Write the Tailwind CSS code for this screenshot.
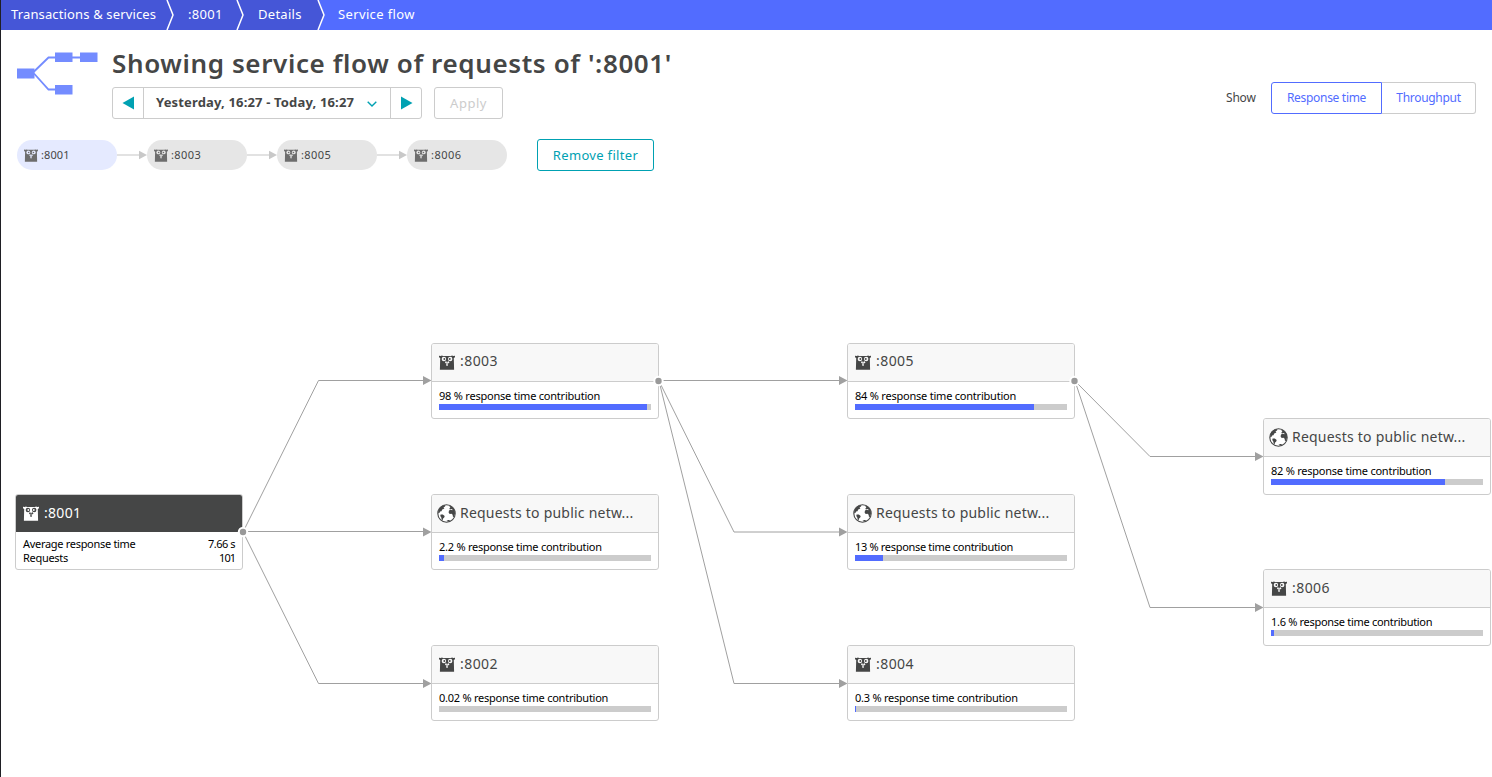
<!DOCTYPE html>
<html lang="en">
<head>
<meta charset="utf-8">
<title>Service flow</title>
<script src="https://cdn.jsdelivr.net/npm/@tailwindcss/browser@4"></script>
</head>
<body class="h-[777px] w-[1492px] overflow-hidden bg-white font-['Noto_Sans','Open_Sans',sans-serif] text-[#454646]">
<svg width="0" height="0" class="absolute">
  <symbol id="gopher" viewBox="0 0 16 15">
    <path fill="currentColor" d="M1.700 1 3 .6 4 .9h8l1-.3 1.300.4 1.700-.3v1.600l-1.200.8.3 11.600H.9l.3-11.600L0 2.300V.7z"/>
    <g fill="var(--face)"><circle cx="4.900" cy="4" r="2.200"/><circle cx="11.200" cy="4" r="2.200"/><ellipse cx="8.100" cy="7.300" rx="2" ry="1.300"/><path d="M7.200 8.500h1.800v2.200H7.200z"/></g>
    <g fill="currentColor"><circle cx="5.300" cy="4" r=".9"/><circle cx="10.800" cy="4" r=".9"/><ellipse cx="8.100" cy="6.700" rx=".9" ry=".6"/><path d="M7.900 8.800h.4v1.600h-.4z"/></g>
  </symbol>
  <symbol id="globe" viewBox="0 0 19 19">
    <circle cx="9.500" cy="9.500" r="8.700" fill="#fff" stroke="#454646" stroke-width="1.100"/>
    <path fill="#454646" d="M1.200 7.400C2 4.300 4.500 1.700 7.500 1.100l1 .6-.8 1.100-1.300.6 1 .9-.9.8-1.300.5-.7 1.600-1.500.3-.2 1.100L1.200 9.500zM3.600 10.400l2.200.2 1.900 1.300-.5 1.600-1.100.9-.5 1.900-.9-.6-.4-2.200-1-1.500zM11.800 1.200c3.200.9 5.400 3.200 6.100 6.300l.1 2.300-1.300 3.300-.7-.2-.4-2.200-1-1-1.900.2-1.100-1.400.4-1.900 1.500-.8 1.800.5.3-.7-1.500-.6-1.300.4-.4-1.100 1-.9-.8-.8zM9.300 17l1.900-1 2.100.1-1.700 1.500z"/>
  </symbol>
</svg>
<div class="flex h-full flex-col border-l border-[#1f1f24]">
  <nav class="relative flex h-[30px] shrink-0 bg-[#526cff] text-[13px] leading-[29px] text-white">
    <svg class="absolute left-0 top-0" width="330" height="30" fill="none"><path fill="#4556d7" d="M0 0h317.500l6 15-6 15H0z"/><path stroke="#fff" stroke-width="1.500" d="m166 0 6 15-6 15M236 0l6 15-6 15M317 0l6 15-6 15"/></svg>
    <a class="relative w-[177px] pl-2.5 tracking-[0.14px]">Transactions &amp; services</a>
    <a class="relative w-[70px] pl-2.5 tracking-[0.3px]">:8001</a>
    <a class="relative w-20 pl-2.5 tracking-[0.28px]">Details</a>
    <a class="relative pl-2.5 tracking-[0.36px]">Service flow</a>
  </nav>
  <header class="flex h-[89px] shrink-0 pl-4 pr-4">
    <svg class="mt-5 w-[95px] shrink-0" height="48" viewBox="0 0 95 48"><path d="M15 23.500 31.500 7.500H72M17 23.500 31.500 39.500H40" fill="none" stroke="#748cff" stroke-width="1.800"/><path fill="#748cff" d="M0 18.500h17.500v10H0zM38 2.500h17.500v9.500H38zM63 2.500h17.500v9.500H63zM38 35h17.500v9.500H38z"/></svg>
    <div class="flex-1">
      <h1 class="mt-3.5 h-[43px] whitespace-nowrap text-[26px] font-semibold leading-[38px] tracking-[0.62px]">Showing service flow of requests of ':8001'</h1>
      <div class="flex h-8">
        <div class="flex w-[310px] rounded-[3px] border border-[#ccc]">
          <button class="flex w-[31px] items-center justify-center border-r border-[#ccc]"><svg width="12" height="14"><path fill="#00a1b2" d="M12 .5v13L.5 7z"/></svg></button>
          <button class="flex flex-1 items-center border-r border-[#ccc] pl-3 text-[13px] font-bold"><span class="w-[211px] whitespace-nowrap text-left tracking-[0.16px]">Yesterday, 16:27 - Today, 16:27</span><svg class="mt-0.5" width="10" height="6" fill="none" stroke="#00a1b2" stroke-width="1.400"><path d="m.7.7 4.300 4.300L9.300.7"/></svg></button>
          <button class="flex w-[30px] items-center justify-center pl-0.5"><svg width="12" height="14"><path fill="#00a1b2" d="M0 .5v13L11.500 7z"/></svg></button>
        </div>
        <button class="ml-3 w-[69px] rounded-[3px] border border-[#ccc] pt-0.5 text-[13px] tracking-[0.5px] text-[#ccc]">Apply</button>
      </div>
    </div>
    <div class="mt-[52px] flex h-8 items-center text-xs">
      <span class="w-[45px] tracking-[-0.2px]">Show</span>
      <button class="h-8 w-[111px] rounded-l-[3px] border border-[#526cff] tracking-[-0.3px] text-[#526cff]">Response time</button>
      <button class="h-8 w-[94px] rounded-r-[3px] border border-l-0 border-[#ccc] tracking-[-0.3px] text-[#526cff]">Throughput</button>
    </div>
  </header>
  <div class="mt-5 flex h-8 shrink-0 items-center pl-4 text-[11px]">
    <div class="flex h-[30px] w-[100px] items-center gap-[3px] rounded-full bg-[#e5eaff] pl-[7px] tracking-[0.1px] [--face:#e5eaff]"><svg width="14" height="13" class="text-[#6d6d6d]"><use href="#gopher"/></svg>:8001</div>
    <svg width="30" height="10"><path stroke="#e2e2e2" stroke-width="2" d="M0 5h23"/><path fill="#c8c8c8" d="M22 .8v8.400L30 5z"/></svg>
    <div class="flex h-[30px] w-[100px] items-center gap-[3px] rounded-full bg-[#e6e6e6] pl-[7px] tracking-[0.4px] [--face:#e6e6e6]"><svg width="14" height="13" class="text-[#6d6d6d]"><use href="#gopher"/></svg>:8003</div>
    <svg width="30" height="10"><path stroke="#e2e2e2" stroke-width="2" d="M0 5h23"/><path fill="#c8c8c8" d="M22 .8v8.400L30 5z"/></svg>
    <div class="flex h-[30px] w-[100px] items-center gap-[3px] rounded-full bg-[#e6e6e6] pl-[7px] tracking-[0.4px] [--face:#e6e6e6]"><svg width="14" height="13" class="text-[#6d6d6d]"><use href="#gopher"/></svg>:8005</div>
    <svg width="30" height="10"><path stroke="#e2e2e2" stroke-width="2" d="M0 5h23"/><path fill="#c8c8c8" d="M22 .8v8.400L30 5z"/></svg>
    <div class="flex h-[30px] w-[100px] items-center gap-[3px] rounded-full bg-[#e6e6e6] pl-[7px] tracking-[0.5px] [--face:#e6e6e6]"><svg width="14" height="13" class="text-[#6d6d6d]"><use href="#gopher"/></svg>:8006</div>
    <button class="ml-[30px] h-8 w-[117px] rounded-[3px] border border-[#00a1b2] pt-0.5 text-[13px] tracking-[0.33px] text-[#00a1b2]">Remove filter</button>
  </div>
</div>

<main>
  <svg class="absolute left-0 top-0" width="1492" height="777" fill="none">
    <path stroke="#a0a0a0" d="m243 532 75.500-151.500H425M243 531.500H425M243 532l75.500 151.500H425M659 380.500H840M659 381l75 151H840M659 381l75 302.500H840M1075 381l75 75.500H1256M1075 381l75 226.500H1256"/>
    <path fill="#a0a0a0" d="m423 376 8.500 4.500-8.500 4.500zM423 527.500l8.500 4.500-8.500 4.500zM423 679l8.500 4.500-8.500 4.500zM839 376l8.500 4.500-8.500 4.500zM839 527.500l8.500 4.500-8.500 4.500zM839 679l8.500 4.500-8.500 4.500zM1255 452l8.500 4.500-8.500 4.500zM1255 603l8.500 4.500-8.500 4.500z"/>
  </svg>

  <section class="absolute left-[15px] top-[494px] flex h-[76px] w-[228px] flex-col rounded-[3px] border border-[#ccc] bg-white text-[11px] text-black">
    <h2 class="flex h-[37px] shrink-0 items-center gap-[5px] rounded-t-[2px] bg-[#454646] pl-[7px] text-sm text-white [--face:#454646]"><svg width="16" height="15"><use href="#gopher"/></svg><span class="pb-0.5 tracking-[0.3px]">:8001</span></h2>
    <div class="mt-[5px] flex justify-between px-[7px] leading-[14px]"><span class="tracking-[-0.3px]">Average response time</span><span class="tracking-[-0.5px]">7.66 s</span></div>
    <div class="flex justify-between px-[7px] leading-[14px]"><span class="tracking-[-0.3px]">Requests</span><span class="tracking-[-1px]">101</span></div>
  </section>

  <section class="absolute left-[431px] top-[343px] h-[76px] w-[228px] rounded-[3px] border border-[#ccc] bg-white text-[11px] text-black">
    <h2 class="flex h-[37.500px] items-center gap-[5px] rounded-t-[2px] border-b border-[#ccc] bg-[#f8f8f8] pl-[7px] text-sm text-[#454646] [--face:#f8f8f8]"><svg width="16" height="15"><use href="#gopher"/></svg><span class="pb-0.5 tracking-[0.45px]">:8003</span></h2>
    <p class="mt-[7px] ml-[7px] h-[15.500px] leading-[14px] tracking-[-0.22px]">98 % response time contribution</p>
    <div class="ml-[7px] h-1.5 w-[212px] bg-[#ccc]"><div class="h-full bg-[#526cff]" style="width:98%"></div></div>
  </section>
  <section class="absolute left-[431px] top-[494px] h-[76px] w-[228px] rounded-[3px] border border-[#ccc] bg-white text-[11px] text-black">
    <h2 class="flex h-[37.500px] items-center gap-1 rounded-t-[2px] border-b border-[#ccc] bg-[#f8f8f8] pl-[5px] text-sm text-[#454646]"><svg width="19" height="19"><use href="#globe"/></svg><span class="tracking-[0.22px]">Requests to public netw...</span></h2>
    <p class="mt-[7px] ml-[7px] h-[15.500px] leading-[14px] tracking-[-0.25px]">2.2 % response time contribution</p>
    <div class="ml-[7px] h-1.5 w-[212px] bg-[#ccc]"><div class="h-full bg-[#526cff]" style="width:2.2%"></div></div>
  </section>
  <section class="absolute left-[431px] top-[645px] h-[76px] w-[228px] rounded-[3px] border border-[#ccc] bg-white text-[11px] text-black">
    <h2 class="flex h-[37.500px] items-center gap-[5px] rounded-t-[2px] border-b border-[#ccc] bg-[#f8f8f8] pl-[7px] text-sm text-[#454646] [--face:#f8f8f8]"><svg width="16" height="15"><use href="#gopher"/></svg><span class="tracking-[0.45px]">:8002</span></h2>
    <p class="mt-[7px] ml-[7px] h-[15.500px] leading-[14px] tracking-[-0.24px]">0.02 % response time contribution</p>
    <div class="ml-[7px] h-1.5 w-[212px] bg-[#ccc]"></div>
  </section>

  <section class="absolute left-[847px] top-[343px] h-[76px] w-[228px] rounded-[3px] border border-[#ccc] bg-white text-[11px] text-black">
    <h2 class="flex h-[37.500px] items-center gap-[5px] rounded-t-[2px] border-b border-[#ccc] bg-[#f8f8f8] pl-[7px] text-sm text-[#454646] [--face:#f8f8f8]"><svg width="16" height="15"><use href="#gopher"/></svg><span class="pb-0.5 tracking-[0.45px]">:8005</span></h2>
    <p class="mt-[7px] ml-[7px] h-[15.500px] leading-[14px] tracking-[-0.22px]">84 % response time contribution</p>
    <div class="ml-[7px] h-1.5 w-[212px] bg-[#ccc]"><div class="h-full bg-[#526cff]" style="width:84.400%"></div></div>
  </section>
  <section class="absolute left-[847px] top-[494px] h-[76px] w-[228px] rounded-[3px] border border-[#ccc] bg-white text-[11px] text-black">
    <h2 class="flex h-[37.500px] items-center gap-1 rounded-t-[2px] border-b border-[#ccc] bg-[#f8f8f8] pl-[5px] text-sm text-[#454646]"><svg width="19" height="19"><use href="#globe"/></svg><span class="tracking-[0.22px]">Requests to public netw...</span></h2>
    <p class="mt-[7px] ml-[7px] h-[15.500px] leading-[14px] tracking-[-0.32px]">13 % response time contribution</p>
    <div class="ml-[7px] h-1.5 w-[212px] bg-[#ccc]"><div class="h-full bg-[#526cff]" style="width:13%"></div></div>
  </section>
  <section class="absolute left-[847px] top-[645px] h-[76px] w-[228px] rounded-[3px] border border-[#ccc] bg-white text-[11px] text-black">
    <h2 class="flex h-[37.500px] items-center gap-[5px] rounded-t-[2px] border-b border-[#ccc] bg-[#f8f8f8] pl-[7px] text-sm text-[#454646] [--face:#f8f8f8]"><svg width="16" height="15"><use href="#gopher"/></svg><span class="tracking-[0.45px]">:8004</span></h2>
    <p class="mt-[7px] ml-[7px] h-[15.500px] leading-[14px] tracking-[-0.25px]">0.3 % response time contribution</p>
    <div class="ml-[7px] h-1.5 w-[212px] bg-[#ccc]"><div class="h-full bg-[#526cff]" style="width:.3%"></div></div>
  </section>

  <section class="absolute left-[1263px] top-[418px] h-[76.500px] w-[228px] rounded-[3px] border border-[#ccc] bg-white text-[11px] text-black">
    <h2 class="flex h-[38px] items-center gap-1 rounded-t-[2px] border-b border-[#ccc] bg-[#f8f8f8] pl-[5px] text-sm text-[#454646]"><svg width="19" height="19"><use href="#globe"/></svg><span class="pb-0.5 tracking-[0.22px]">Requests to public netw...</span></h2>
    <p class="mt-[7px] ml-[7px] h-[15px] leading-[14px] tracking-[-0.24px]">82 % response time contribution</p>
    <div class="ml-[7px] h-1.5 w-[212px] bg-[#ccc]"><div class="h-full bg-[#526cff]" style="width:82%"></div></div>
  </section>
  <section class="absolute left-[1263px] top-[569px] h-[76.500px] w-[228px] rounded-[3px] border border-[#ccc] bg-white text-[11px] text-black">
    <h2 class="flex h-[38px] items-center gap-[5px] rounded-t-[2px] border-b border-[#ccc] bg-[#f8f8f8] pl-[7px] text-sm text-[#454646] [--face:#f8f8f8]"><svg width="16" height="15"><use href="#gopher"/></svg><span class="pb-0.5 tracking-[0.45px]">:8006</span></h2>
    <p class="mt-[7px] ml-[7px] h-[15px] leading-[14px] tracking-[-0.3px]">1.6 % response time contribution</p>
    <div class="ml-[7px] h-1.5 w-[212px] bg-[#ccc]"><div class="h-full bg-[#526cff]" style="width:1.600%"></div></div>
  </section>

  <svg class="absolute left-0 top-0" width="1492" height="777" fill="#999" stroke="#fff" stroke-width="2"><circle cx="243" cy="532" r="4.200"/><circle cx="658.500" cy="381" r="4.200"/><circle cx="1074.500" cy="381" r="4.200"/></svg>
</main>
</body>
</html>
